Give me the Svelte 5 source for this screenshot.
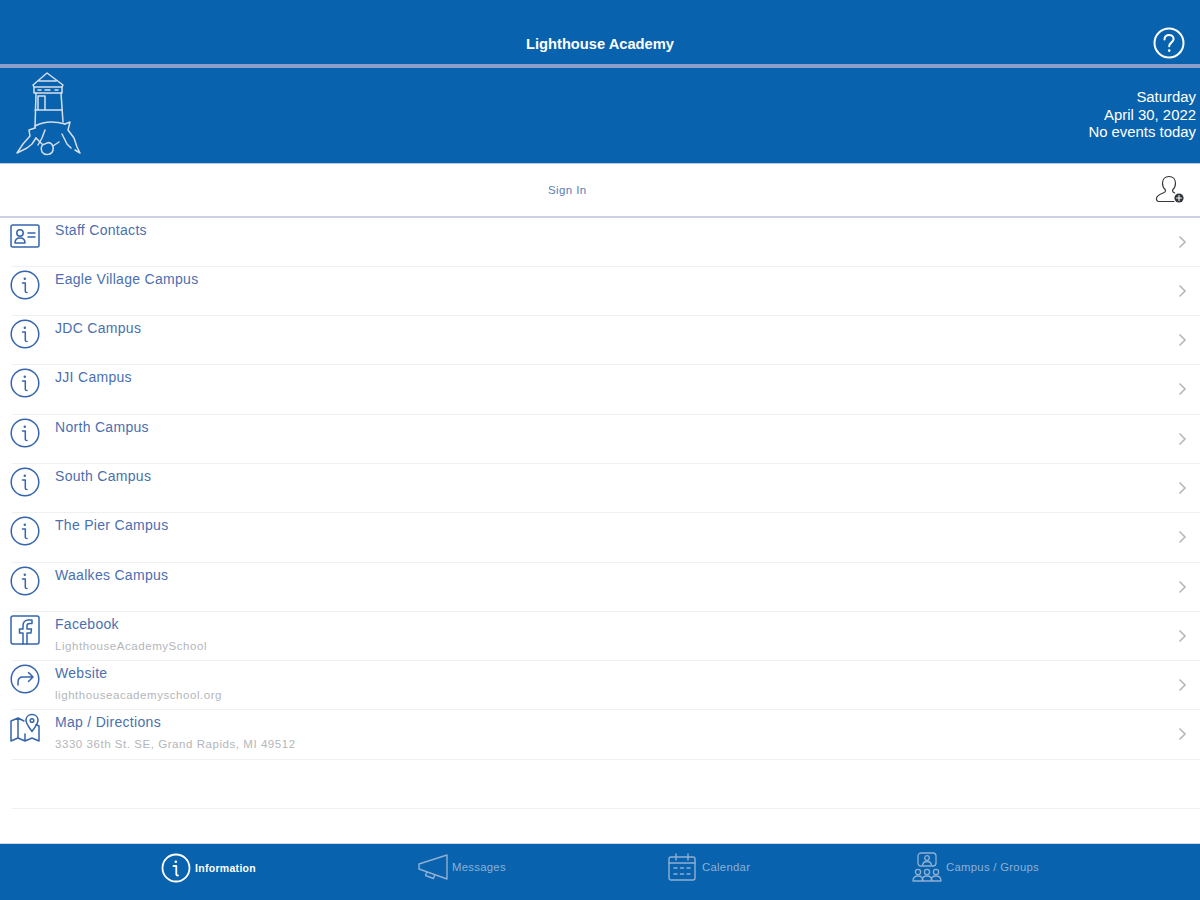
<script lang="ts">
  // Info screen of the school app: header, date banner, sign-in row,
  // link list and bottom tab bar.
  type Row = { title: string; sub?: string; icon: string };

  const rows: Row[] = [
    { title: 'Staff Contacts', icon: 'contact' },
    { title: 'Eagle Village Campus', icon: 'info' },
    { title: 'JDC Campus', icon: 'info' },
    { title: 'JJI Campus', icon: 'info' },
    { title: 'North Campus', icon: 'info' },
    { title: 'South Campus', icon: 'info' },
    { title: 'The Pier Campus', icon: 'info' },
    { title: 'Waalkes Campus', icon: 'info' },
    { title: 'Facebook', sub: 'LighthouseAcademySchool', icon: 'facebook' },
    { title: 'Website', sub: 'lighthouseacademyschool.org', icon: 'share' },
    { title: 'Map / Directions', sub: '3330 36th St. SE, Grand Rapids, MI 49512', icon: 'map' }
  ];
</script>

<div class="screen">
  <header class="topbar">
    <span class="app-title">Lighthouse Academy</span>
    <svg class="help" viewBox="0 0 32 32" width="32" height="32" fill="none" stroke="#fff" stroke-width="2">
      <circle cx="16" cy="16" r="14.5" />
      <path d="M11.5 12.5c0-3 2.2-4.6 4.6-4.6s4.5 1.6 4.5 4c0 3.4-4.4 3.6-4.4 7.4" stroke-linecap="round" />
      <circle cx="16.2" cy="23.6" r="1.3" fill="#fff" stroke="none" />
    </svg>
  </header>

  <section class="banner">
    <svg class="logo" viewBox="0 0 66 86" width="66" height="86" fill="none" stroke="#d5deec" stroke-width="1.5" stroke-linejoin="round" stroke-linecap="round">
      <path d="M32 1 L18 13 L19 15 H47 L48 13 Z M24 9 H41" />
      <path d="M19 15 V21 H47 V15" />
      <path d="M23 18h3M30 18h5M40 18h3" />
      <path d="M21 21 L20 56 M46 21 L48 50" />
      <path d="M23 24 V38 M23 24 H30 V38 M20 38 H47" />
      <path d="M20 54 Q33 47 50 52" />
      <path d="M50 52 L55 50 L53 58 L59 66 L62 75 L65 81 L60 78" />
      <path d="M20 56 L14 58 L15 64 L8 72 L2 81 L12 76 L17 72 L21 66" />
      <path d="M47 62 L52 72 L56 76 M30 58 L27 66 L23 73" />
      <path d="M30 72 C36 68 39 74 38 78 C37 83 30 84 27 80 C25 76 27 72 30 72" />
      <path d="M21 66 L27 72 M38 74 L44 70" />
    </svg>
    <div class="today">
      <div>Saturday</div>
      <div>April 30, 2022</div>
      <div>No events today</div>
    </div>
  </section>

  <section class="signin">
    <span class="signin-label">Sign In</span>
    <svg class="signin-icon" viewBox="0 0 30 30" width="30" height="30" fill="none" stroke="#33373d" stroke-width="1.2" stroke-linecap="round">
      <path d="M14 1.5c-4 0-6.500 3-6.500 6.800 0 3 1 5 2.800 6.500v1.700c0 1.600-8.300 2.400-8.800 6.800-.2 2 .6 3.200 2.400 3.200H19" />
      <path d="M14 1.500c4 0 6.500 3 6.500 6.800 0 3-1 5-2.800 6.500v1.700c0 .6.800 1 2 1.500" />
      <circle cx="24" cy="23" r="4.600" fill="#33373d" stroke="none" />
      <path d="M24 20.600v4.800M21.600 23h4.800" stroke="#fff" stroke-width="1.100" />
    </svg>
  </section>

  <ul class="list">
    {#each rows as row (row.title)}
      <li class="row">
        <span class="row-icon">
          <svg viewBox="0 0 30 30" width="30" height="30" fill="none" stroke="#3565ad" stroke-width="1.5" stroke-linecap="round" stroke-linejoin="round">
            {#if row.icon === 'contact'}
              <rect x="1" y="4" width="28" height="22" rx="2" />
              <circle cx="10" cy="12" r="3.2" />
              <path d="M5 22c0-3.5 2-5 5-5s5 1.5 5 5zM18 12h7M18 16h7" />
            {:else if row.icon === 'info'}
              <circle cx="15" cy="15" r="13.8" />
              <circle cx="14.8" cy="8.8" r="1.2" fill="#3565ad" stroke="none" />
              <path d="M12.5 13h2.800v8.500c0 .8.500 1 1.700 1" />
            {:else if row.icon === 'facebook'}
              <rect x="1" y="1" width="28" height="28" rx="2" />
              <path d="M17 29v-11h4l.5-4H17v-3c0-1.500.8-2.500 2.500-2.500H22V5h-3.500C15 5 13 7.500 13 10.500V14H9.500v4H13v11" />
            {:else if row.icon === 'share'}
              <circle cx="15" cy="15" r="13.8" />
              <path d="M8 21v-3c0-3 2-5 5-5h10M18.500 8.500 23 13l-4.500 4.500" />
            {:else}
              <path d="M1 8 8 5v20l-7 3zM8 5l6 3M8 25l7 3 7-3 7 3V13l-3-1.500M15 28v-7" />
              <path d="M22 1.500c-3.600 0-6 2.500-6 5.800 0 3.500 3.500 7.500 6 11.200 2.500-3.700 6-7.700 6-11.200 0-3.300-2.400-5.800-6-5.800z" />
              <circle cx="22" cy="7.500" r="1.800" />
            {/if}
          </svg>
        </span>
        <div class="row-text">
          <div class="row-title">{row.title}</div>
          {#if row.sub}<div class="row-sub">{row.sub}</div>{/if}
        </div>
        <svg class="chevron" viewBox="0 0 9 14" width="9" height="14" fill="none" stroke="#b4b8bd" stroke-width="1.6">
          <path d="M1.500 1.500 7 7l-5.500 5.500" />
        </svg>
      </li>
    {/each}
    <li class="row"></li>
  </ul>

  <nav class="tabs">
    <div class="tab active tab-info">
      <svg viewBox="0 0 30 30" width="30" height="30" fill="none" stroke="#fff" stroke-width="1.8" stroke-linecap="round" stroke-linejoin="round">
        <circle cx="15" cy="15" r="13.5" />
        <circle cx="14.8" cy="8.8" r="1.3" fill="#fff" stroke="none" />
        <path d="M12.500 13h2.800v8.500c0 .8.500 1 1.700 1" />
      </svg>
      <span>Information</span>
    </div>
    <div class="tab tab-msg">
      <svg viewBox="0 0 30 26" width="30" height="26" fill="none" stroke="#8fb0d3" stroke-width="1.4" stroke-linejoin="round">
        <path d="M1 10 29 1v24L1 15zM9 17.500l-1.500 4 8 3 1.500-4.500" />
      </svg>
      <span>Messages</span>
    </div>
    <div class="tab tab-cal">
      <svg viewBox="0 0 28 28" width="28" height="28" fill="none" stroke="#8fb0d3" stroke-width="1.4" stroke-linecap="round">
        <rect x="1" y="4" width="26" height="23" rx="2" />
        <path d="M1 10h26M8 1v6M20 1v6M6 15h3M12.500 15h3M19 15h3M6 21h3M12.500 21h3M19 21h3" />
      </svg>
      <span>Calendar</span>
    </div>
    <div class="tab tab-groups">
      <svg viewBox="0 0 30 30" width="30" height="30" fill="none" stroke="#8fb0d3" stroke-width="1.3" stroke-linejoin="round">
        <rect x="6" y="1" width="18" height="13" rx="3" />
        <circle cx="15" cy="6" r="2.300" />
        <path d="M10.500 14c0-3 2-4.500 4.500-4.500s4.500 1.500 4.500 4.500" />
        <circle cx="6" cy="20" r="2.600" /><circle cx="15" cy="20" r="2.600" /><circle cx="24" cy="20" r="2.600" />
        <path d="M1 29c0-3.500 2-5 5-5s5 1.500 5 5zM10 29c0-3.500 2-5 5-5s5 1.500 5 5zM19 29c0-3.500 2-5 5-5s5 1.500 5 5z" />
      </svg>
      <span>Campus / Groups</span>
    </div>
  </nav>
</div>

<style>
  :global(body) {
    margin: 0;
    background: #fff;
  }
  .screen {
    width: 1200px;
    height: 900px;
    display: flex;
    flex-direction: column;
    font-family: 'Liberation Sans', Arial, sans-serif;
    overflow: hidden;
  }
  .topbar {
    height: 64px;
    flex: none;
    background: #0862ad;
    border-bottom: 4px solid #8b9fc9;
    display: flex;
    align-items: flex-end;
    justify-content: center;
    position: relative;
  }
  .app-title {
    color: #fff;
    font-size: 14.7px;
    font-weight: 700;
    line-height: 16px;
    margin-bottom: 12px;
  }
  .help {
    position: absolute;
    right: 15px;
    top: 27px;
  }
  .banner {
    height: 91px;
    flex: none;
    background: #0862ad;
    border-bottom: 1px solid #b9cbe4;
    display: flex;
    justify-content: space-between;
    align-items: flex-start;
    padding: 4px 4px 0 15px;
  }
  .today {
    margin-top: 17px;
    text-align: right;
    color: #fff;
    font-size: 14.9px;
    line-height: 17.5px;
  }
  .signin {
    height: 51.5px;
    flex: none;
    display: flex;
    align-items: center;
    justify-content: space-between;
    border-bottom: 2px solid #ccd0e8;
    padding: 0 15px 0 0;
  }
  .signin-label {
    margin-left: 548px;
    color: #5a7db5;
    font-size: 11.5px;
    letter-spacing: 0.4px;
  }
  .list {
    list-style: none;
    margin: 0 0 0 12px;
    padding: 0;
    flex: 1;
  }
  .row {
    height: 49.3px;
    box-sizing: border-box;
    border-bottom: 1px solid #eef0f2;
    display: flex;
    align-items: flex-start;
    position: relative;
  }
  .row-icon {
    width: 30px;
    height: 30px;
    margin: 3px 15px 0 -2px;
    flex: none;
  }
  .row-icon svg {
    display: block;
  }
  .row-text {
    flex: 1;
    padding-top: 4px;
  }
  .row-title {
    color: #4a6fb0;
    font-size: 14px;
    line-height: 16px;
    letter-spacing: 0.3px;
  }
  .row-sub {
    margin-top: 7px;
    color: #b3b6ba;
    font-size: 11.5px;
    line-height: 14px;
    letter-spacing: 0.55px;
  }
  .chevron {
    position: absolute;
    right: 13px;
    top: 17px;
  }
  .tabs {
    height: 57px;
    flex: none;
    background: #0862ad;
    border-top: 1px solid #cfd9e8;
    box-sizing: border-box;
    display: flex;
    align-items: flex-start;
    padding-left: 161px;
  }
  .tab {
    display: flex;
    align-items: center;
    gap: 4px;
    height: 46px;
    color: #8fb0d3;
    font-size: 11.3px;
    letter-spacing: 0.3px;
  }
  .tab svg {
    flex: none;
  }
  .tab.active {
    color: #fff;
    font-weight: 700;
    font-size: 10.5px;
  }
  .tab-info {
    margin-top: 1px;
    width: 257px;
  }
  .tab-msg {
    width: 250px;
  }
  .tab-cal {
    width: 244px;
  }
  .tab-cal span {
    margin-left: 2px;
  }
</style>
